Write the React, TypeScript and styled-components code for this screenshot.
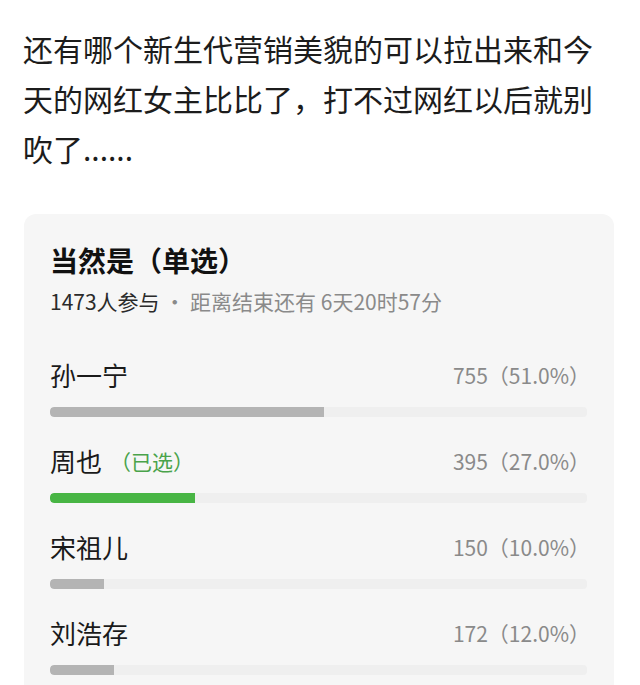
import React from "react";
import styled, { createGlobalStyle } from "styled-components";

const Global = createGlobalStyle`
  html, body {
    margin: 0;
    padding: 0;
    background: #ffffff;
  }
  body {
    font-family: "Noto Sans CJK SC", "Noto Sans", sans-serif;
    color: #1a1a1a;
  }
`;

const Page = styled.div`
  width: 640px;
  height: 685px;
  overflow: hidden;
  background: #ffffff;
`;

const Paragraph = styled.p`
  margin: 0;
  padding: 23px 23px 0;
  font-size: 30px;
  line-height: 50px;
  color: #1c1c1c;
`;

const Card = styled.section`
  margin: 41px 26px 0 24px;
  padding: 28px 27px 40px 26px;
  background: #f6f6f6;
  border-radius: 12px;
`;

const Title = styled.h2`
  margin: 0;
  font-size: 28px;
  line-height: 36px;
  font-weight: 700;
  color: #111;
`;

const Meta = styled.div`
  margin-top: 9px;
  font-size: 21px;
  line-height: 28px;
  color: #8a8a8a;
`;

const MetaStrong = styled.span`
  color: #2a2a2a;
`;

const Options = styled.div`
  margin-top: 43px;
  display: flex;
  flex-direction: column;
  gap: 27px;
`;

const Option = styled.div`
  display: flex;
  flex-direction: column;
  gap: 15px;
`;

const OptionHead = styled.div`
  display: flex;
  align-items: center;
  justify-content: space-between;
  height: 34px;
  margin-right: -3px;
`;

const Name = styled.span`
  font-size: 26px;
  line-height: 34px;
  color: #1a1a1a;
  display: flex;
  align-items: center;
`;

const Chosen = styled.span`
  margin-left: 8px;
  font-size: 21px;
  color: #4aa34a;
`;

const Count = styled.span`
  font-size: 21px;
  color: #8a8a8a;
`;

const Track = styled.div`
  height: 10px;
  border-radius: 4px;
  background: #efefef;
  overflow: hidden;
`;

const Fill = styled.div<{ $selected?: boolean }>`
  height: 100%;
  border-radius: 4px 0 0 4px;
  background: ${(p) => (p.$selected ? "#48b544" : "#b4b4b4")};
`;

const options = [
  { name: "孙一宁", count: 755, pct: 51.0 },
  { name: "周也", count: 395, pct: 27.0, selected: true },
  { name: "宋祖儿", count: 150, pct: 10.0 },
  { name: "刘浩存", count: 172, pct: 12.0 },
];

export default function App() {
  return (
    <Page>
      <Global />
      <Paragraph>
        还有哪个新生代营销美貌的可以拉出来和今天的网红女主比比了，打不过网红以后就别吹了......
      </Paragraph>
      <Card>
        <Title>当然是（单选）</Title>
        <Meta>
          <MetaStrong>1473人参与</MetaStrong> · 距离结束还有 6天20时57分
        </Meta>
        <Options>
          {options.map((o) => (
            <Option key={o.name}>
              <OptionHead>
                <Name>
                  {o.name}
                  {o.selected && <Chosen>（已选）</Chosen>}
                </Name>
                <Count>
                  {o.count}（{o.pct.toFixed(1)}%）
                </Count>
              </OptionHead>
              <Track>
                <Fill $selected={o.selected} style={{ width: `${o.pct}%` }} />
              </Track>
            </Option>
          ))}
        </Options>
      </Card>
    </Page>
  );
}
